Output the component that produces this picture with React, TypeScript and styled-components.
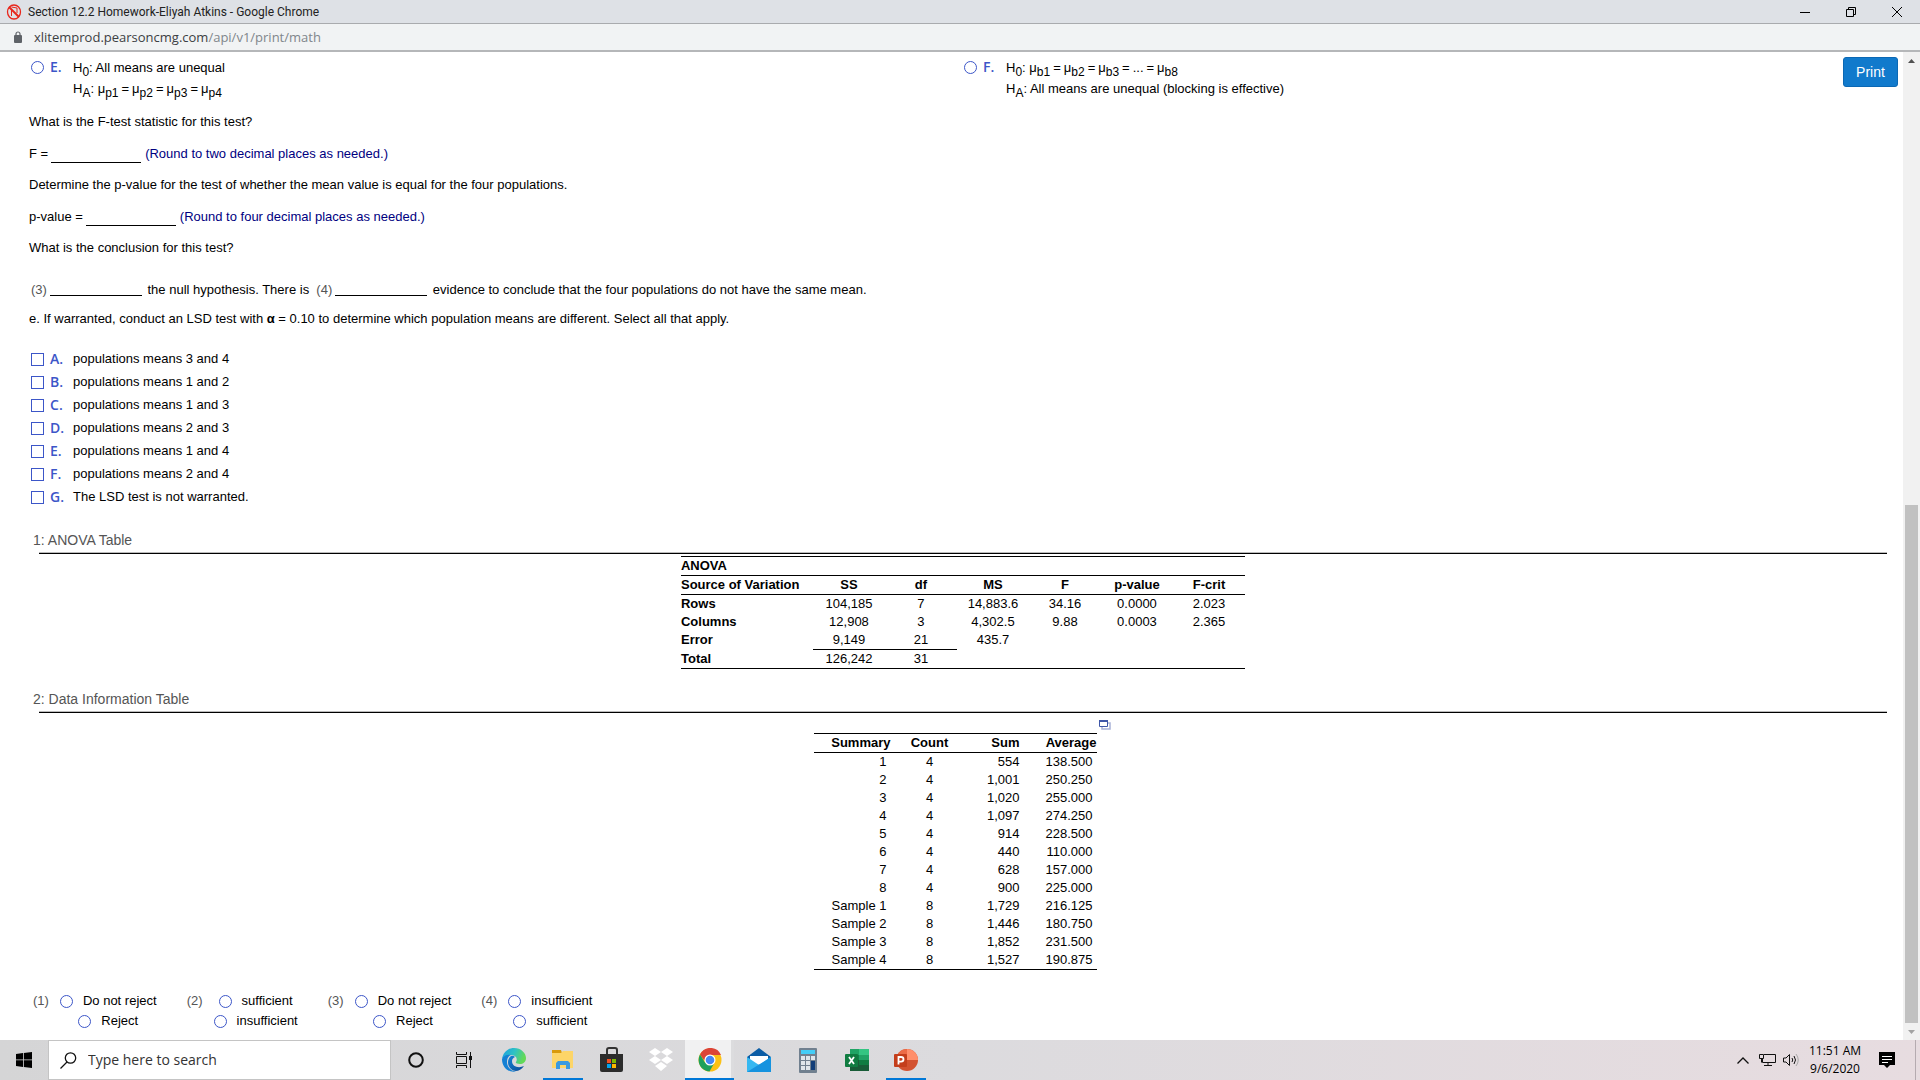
import React from 'react';
import styled, { createGlobalStyle, css } from 'styled-components';

const sans = '"Liberation Sans", Arial, sans-serif';
const ui = '"Open Sans", "Segoe UI", sans-serif';
const blue = '#3c56c8';

const GlobalStyle = createGlobalStyle`
  * { box-sizing: border-box; }
  html, body { margin: 0; padding: 0; overflow: hidden; }
  button, input { font: inherit; margin: 0; padding: 0; border: 0; background: none; color: inherit; border-radius: 0; }
`;

const Screen = styled.div`
  display: flex;
  flex-direction: column;
  height: 100vh;
  background: #fff;
  color: #000;
  font: 13px/16px ${sans};
`;

/* ---------- browser chrome ---------- */
const TitleBar = styled.header`
  display: flex;
  align-items: center;
  height: 24px;
  flex: none;
  padding-left: 6px;
  gap: 6px;
  background: #dee1e6;
  border-bottom: 1px solid #a9abae;
  color: #222;
`;
const WindowTitle = styled.h1`
  margin: 0;
  flex: 1;
  font: 12px/16px Roboto, ${ui};
`;
const WindowButtons = styled.div`
  display: flex;
`;
const WindowButton = styled.button`
  display: grid;
  place-items: center;
  width: 46px;
  height: 20px;
`;
const AddressBar = styled.div`
  display: flex;
  align-items: center;
  gap: 11px;
  height: 28px;
  flex: none;
  padding: 0 0 0 13px;
  background: #f1f3f4;
  border-bottom: 2px solid #b5b7b9;
  color: #3c4043;
  font: 13px/20px ${ui};
`;
const UrlPath = styled.span`
  color: #80868b;
`;

/* ---------- page ---------- */
const Viewport = styled.div`
  position: relative;
  display: flex;
  flex: 1;
  min-height: 0;
`;
const Page = styled.main`
  flex: 1;
  min-width: 0;
  overflow: hidden;
  padding: 7px 8px 0 29px;
`;
const PrintButton = styled.button`
  position: absolute;
  top: 5px;
  right: 22px;
  width: 55px;
  height: 30px;
  border: 1px solid #0b68b4;
  border-radius: 3px;
  background: #117acc;
  color: #fff;
  font: 14px/20px ${sans};
`;
const Hypotheses = styled.div`
  display: grid;
  grid-template-columns: 1fr 1fr;
`;
const Choice = styled.label`
  display: grid;
  grid-template-columns: 21px 23px auto;
  justify-content: start;
`;
const Letter = styled.span`
  color: ${blue};
  font: 600 14px/16px ${ui};
`;
const mark = css`
  appearance: none;
  flex: none;
  width: 13px;
  height: 13px;
  border: 1px solid ${blue};
  background: #fff;
`;
const Radio = styled.input.attrs({ type: 'radio' })`
  ${mark}
  border-radius: 50%;
  ${Choice} & { margin: 2px; }
`;
const Tick = styled.input.attrs({ type: 'checkbox' })`
  ${mark}
  margin: 2px;
`;
const Formula = styled.span`
  line-height: 21px;
  margin-top: -2px;
  & > span { display: block; }
  sub { font-size: 12px; line-height: 0; vertical-align: -4px; }
`;
const Equals = styled.span`
  margin: 0 3px;
`;
const Line = styled.p<{ $tall?: boolean }>`
  display: flex;
  align-items: center;
  margin: 15px 0 0;
  height: ${(p) => (p.$tall ? 17 : 16)}px;
  white-space: pre;
`;
const Conclusion = styled(Line)`
  margin: 26px 0 0;
  padding-left: 2px;
`;
const Prompt = styled(Line)`
  margin-top: 13px;
`;
const Blank = styled.input.attrs({ type: 'text' })<{ $low?: boolean }>`
  width: ${(p) => (p.$low ? 90 : 92)}px;
  height: ${(p) => (p.$low ? 18 : 12)}px;
  margin: 0 ${(p) => (p.$low ? 4 : 2)}px 0 3px;
  align-self: ${(p) => (p.$low ? 'flex-start' : 'center')};
  border-bottom: 1px solid #000;
`;
const Hint = styled.span`
  color: #00007f;
`;
const Num = styled.span`
  color: #555;
`;
const CheckList = styled.div`
  display: grid;
  row-gap: 6px;
  margin: 24px 0 25px;
`;

const Section = styled.section`
  margin: 21px 8px 0 10px;
`;
const SectionTitle = styled.h2`
  margin: 0 0 0 -6px;
  color: #555;
  font: 14px/18px ${sans};
`;
const Rule = styled.div`
  margin: 3px 0 0;
  border-top: 1px solid #bbb;
  border-bottom: 1px solid #000;
`;
const tableBase = css`
  border-collapse: collapse;
  table-layout: fixed;
  border-top: 1px solid #000;
  border-bottom: 1px solid #000;
  font: 13px/18px ${sans};
  th, td { padding: 0; height: 18px; }
`;
const AnovaTable = styled.table`
  ${tableBase}
  width: 564px;
  margin: 2px auto 0;
  text-align: center;
  th:first-child { text-align: left; }
  thead tr { border-bottom: 1px solid #000; }
`;
const Summed = styled.td`
  border-bottom: 1px solid #000;
`;
const DataWrap = styled.div`
  display: flex;
  justify-content: center;
  gap: 2px;
  padding-top: 7px;
`;
const PopButton = styled.button`
  width: 14px;
  height: 12px;
  display: grid;
`;
const DataTable = styled.table`
  ${tableBase}
  width: 283px;
  margin-top: 13px;
  text-align: right;
  thead tr { border-bottom: 1px solid #000; }
  td:first-child, td:last-child { padding-right: 4px; }
  th:nth-child(2), td:nth-child(2) { text-align: center; }
`;
const Answers = styled.div`
  display: flex;
  gap: 30px;
  margin: 21px 0 0 4px;
  font: 13px/20px ${sans};
`;
const Group = styled.fieldset`
  display: flex;
  gap: 11px;
  margin: 0;
  padding: 0;
  border: 0;
`;
const Options = styled.div`
  display: flex;
  flex-direction: column;
  align-items: center;
`;
const Option = styled.label`
  display: flex;
  align-items: center;
  gap: 10px;
`;

const ScrollBar = styled.div`
  display: flex;
  flex-direction: column;
  align-items: center;
  width: 17px;
  flex: none;
  background: #f1f1f1;
`;
const ScrollStep = styled.button`
  display: grid;
  place-items: center;
  width: 17px;
  height: 17px;
`;
const Track = styled.div`
  flex: 1;
  display: grid;
  grid-template-rows: 436fr 518fr;
`;
const Thumb = styled.div`
  grid-row: 2;
  width: 13px;
  background: #c1c1c1;
`;

/* ---------- taskbar ---------- */
const TaskBar = styled.footer`
  display: flex;
  flex: none;
  height: 40px;
  background: linear-gradient(90deg, #d5d5d6, #dcdbde 50%, #e7dce0);
  font: 12px/18px ${ui};
`;
const TaskButton = styled.button<{ $state?: 'open' | 'active' }>`
  display: grid;
  place-items: center;
  width: 49px;
  height: 40px;
  ${(p) => p.$state === 'open' && css`
    background: linear-gradient(#0078d7, #0078d7) center bottom / 40px 2px no-repeat;
  `}
  ${(p) => p.$state === 'active' && css`
    background: #f1f1f2;
    box-shadow: inset 0 -2px #0078d7, inset -3px 0 #dcdcde;
  `}
`;
const StartButton = styled(TaskButton)`
  width: 48px;
`;
const Search = styled.label`
  display: flex;
  align-items: center;
  gap: 11px;
  width: 343px;
  padding-left: 11px;
  border: 1px solid #c4c4c4;
  background: #fff;
  input { flex: 1; min-width: 0; font: 14px/20px ${ui}; outline: none; }
  input::placeholder { color: #333; opacity: 1; }
`;
const Tray = styled.div`
  display: flex;
  align-items: center;
  margin-left: auto;
`;
const TrayButton = styled.button`
  display: grid;
  place-items: center;
  width: 24px;
  height: 40px;
`;
const Clock = styled.time`
  width: 64px;
  text-align: center;
`;
const NoteButton = styled(TrayButton)`
  width: 40px;
  margin-right: 8px;
`;
const DesktopEdge = styled.button`
  width: 5px;
  height: 40px;
  border-left: 1px solid #b5abb0;
`;

const anova: string[][] = [
  ['Rows', '104,185', '7', '14,883.6', '34.16', '0.0000', '2.023'],
  ['Columns', '12,908', '3', '4,302.5', '9.88', '0.0003', '2.365'],
  ['Error', '9,149', '21', '435.7', '', '', ''],
  ['Total', '126,242', '31', '', '', '', ''],
];
const data: string[][] = [
  ['1', '4', '554', '138.500'],
  ['2', '4', '1,001', '250.250'],
  ['3', '4', '1,020', '255.000'],
  ['4', '4', '1,097', '274.250'],
  ['5', '4', '914', '228.500'],
  ['6', '4', '440', '110.000'],
  ['7', '4', '628', '157.000'],
  ['8', '4', '900', '225.000'],
  ['Sample 1', '8', '1,729', '216.125'],
  ['Sample 2', '8', '1,446', '180.750'],
  ['Sample 3', '8', '1,852', '231.500'],
  ['Sample 4', '8', '1,527', '190.875'],
];
const checks = [
  'populations means 3 and 4',
  'populations means 1 and 2',
  'populations means 1 and 3',
  'populations means 2 and 3',
  'populations means 1 and 4',
  'populations means 2 and 4',
  'The LSD test is not warranted.',
];
const answers = [
  ['Do not reject', 'Reject'],
  ['sufficient', 'insufficient'],
  ['Do not reject', 'Reject'],
  ['insufficient', 'sufficient'],
];

const MeansEqual = ({ terms }: { terms: string[] }) => (
  <>
    {terms.map((t, i) => (
      <React.Fragment key={i}>
        {i > 0 && <Equals>=</Equals>}
        {t === '...' ? t : <>μ<sub>{t}</sub></>}
      </React.Fragment>
    ))}
  </>
);

const Edge = () => (
  <svg width="24" height="26" viewBox="0 0 24 26">
    <defs>
      <linearGradient id="edgeTop" x1="0" y1="0" x2="1" y2="0.3">
        <stop offset="0" stopColor="#1b9de2" /><stop offset=".55" stopColor="#2fc2c4" /><stop offset="1" stopColor="#63d957" />
      </linearGradient>
      <linearGradient id="edgeLow" x1="0" y1="0" x2="1" y2="1">
        <stop offset="0" stopColor="#1583d8" /><stop offset="1" stopColor="#0c4a94" />
      </linearGradient>
    </defs>
    <path d="M0 12C1 5 6 1 12 1c7 0 12 5 12 10 0 4-3 6-6 6-3 0-5-1-4-2 2-3 0-7-5-7-4 0-8 2-9 4z" fill="url(#edgeTop)" />
    <path d="M0 12c1-3 5-5 9-4-3 1-4 4-4 7 0 5 4 9 9 9.500C6 26 0 20 0 12z" fill="#1480d4" />
    <path d="M9 9c-4 3-4 9 0 13 3 3 9 3 13-3-5 2.500-12 1-12-5 0-2 1-3 3-4-1-1-3-1.500-4-1z" fill="url(#edgeLow)" />
  </svg>
);
const Folder = () => (
  <svg width="22" height="20" viewBox="0 0 22 20">
    <path d="M0 0h9l1 3H0z" fill="#d99a0b" />
    <path d="M0 3h9l2-2h10v17H0z" fill="#fdd568" />
    <path d="M4 19v-6l2-2h10l2 2v6h-4v-4H8v4z" fill="#3a9ae0" />
  </svg>
);
const Store = () => (
  <svg width="24" height="26" viewBox="0 0 24 26">
    <path d="M7 8V3q0-2 2-2h6q2 0 2 2v5" fill="none" stroke="#333" strokeWidth="2" />
    <path d="M0 7h23v16q0 2-2 2H2q-2 0-2-2z" fill="#2c2c2c" />
    <path d="M7 12h4v4H7z" fill="#f25022" /><path d="M12 12h4v4h-4z" fill="#7fba00" />
    <path d="M7 17h4v4H7z" fill="#00a4ef" /><path d="M12 17h4v4h-4z" fill="#ffb900" />
  </svg>
);
const Dropbox = () => (
  <svg width="24" height="24" viewBox="0 0 24 24" fill="#fff">
    <path d="M6 0l6 4-6 4-6-4zM18 0l6 4-6 4-6-4zM6 8l6 4-6 4-6-4zM18 8l6 4-6 4-6-4zM12 14l6 4-6 5-6-5z" />
  </svg>
);
const Chrome = () => (
  <svg width="24" height="24" viewBox="0 0 24 24">
    <circle cx="12" cy="12" r="11.500" fill="#fbc116" />
    <path d="M23 7H12l-6 5L2 6.500A11.500 11.500 0 0 1 23 7z" fill="#dc4437" />
    <path d="M2 6.500A11.500 11.500 0 0 0 11.500 23.500L16 15.500l-9-1z" fill="#1da05c" />
    <circle cx="12" cy="12" r="5.500" fill="#fff" /><circle cx="12" cy="12" r="4.300" fill="#4587f4" />
  </svg>
);
const Mail = () => (
  <svg width="24" height="24" viewBox="0 0 24 24">
    <path d="M0 9L12 0l12 9v3H0z" fill="#0c5da5" />
    <path d="M3 8h18v8H3z" fill="#fff" />
    <path d="M0 9l12 8 12-8v15H0z" fill="#35b8f1" /><path d="M0 24L24 9v15z" fill="#1593df" />
  </svg>
);
const Calc = () => (
  <svg width="18" height="25" viewBox="0 0 18 25">
    <rect width="18" height="25" rx="1" fill="#71808f" />
    <path d="M2 2h14v4H2z" fill="#43cdf7" />
    <path d="M2 8h4v4H2zM7 8h4v4H7zM12 8h4v4h-4zM2 13h4v4H2zM7 13h4v4H7zM2 18h4v4H2zM7 18h4v4H7z" fill="#dfe5ea" />
    <path d="M12 13h4v9h-4z" fill="#123e78" />
  </svg>
);
const Excel = () => (
  <svg width="24" height="24" viewBox="0 0 24 24">
    <path d="M5 1h9v22H5z" fill="#20a465" /><path d="M14 1h10v6H14z" fill="#34c582" />
    <path d="M5 7h9v5H5z" fill="#138049" /><path d="M14 7h10v5H14z" fill="#21a366" />
    <path d="M5 12h19v11H5z" fill="#185c37" /><path d="M14 12h10v5H14z" fill="#107c41" />
    <rect x="0" y="6" width="13" height="13" rx="1" fill="#107c41" />
    <path d="M4 9l5 7M9 9l-5 7" stroke="#fff" strokeWidth="1.800" />
  </svg>
);
const PowerPoint = () => (
  <svg width="24" height="24" viewBox="0 0 24 24">
    <circle cx="13" cy="12" r="11" fill="#d35230" />
    <path d="M13 1a11 11 0 0 1 11 11H13z" fill="#ff8f6b" /><path d="M13 1v11H2A11 11 0 0 1 13 1z" fill="#ed6c47" />
    <rect x="0" y="6" width="13" height="13" rx="1" fill="#c43e1c" />
    <path d="M4.500 16.500V9h2.500q2.500 0 2.500 2.300T7 13.700H4.500" fill="none" stroke="#fff" strokeWidth="1.800" />
  </svg>
);
const Cortana = () => (
  <svg width="16" height="18" viewBox="0 0 16 18"><circle cx="8" cy="9" r="6.800" fill="none" stroke="#111" strokeWidth="2" /></svg>
);
const TaskView = () => (
  <svg width="17" height="16" viewBox="0 0 17 16" fill="none" stroke="#111">
    <path d="M.5 0v2.500h10V0M.5 16v-2.500h10V16M.5 4.500h10v7H.5zM14.500 0v4M14.500 8v8" />
    <path d="M13 4h3v4h-3z" fill="#111" stroke="none" />
  </svg>
);

const apps: [string, React.ReactNode, ('open' | 'active')?][] = [
  ['Cortana', <Cortana />],
  ['Task View', <TaskView />],
  ['Microsoft Edge', <Edge />],
  ['File Explorer', <Folder />, 'open'],
  ['Microsoft Store', <Store />],
  ['Dropbox', <Dropbox />],
  ['Google Chrome', <Chrome />, 'active'],
  ['Mail', <Mail />],
  ['Calculator', <Calc />],
  ['Excel', <Excel />],
  ['PowerPoint', <PowerPoint />, 'open'],
];

export default function App() {
  return (
    <Screen>
      <GlobalStyle />
      <TitleBar>
        <svg width="16" height="16" viewBox="0 0 16 16" fill="none" stroke="#e8261c">
          <ellipse cx="8" cy="8" rx="6.500" ry="7" strokeWidth="1.300" />
          <path d="M3 3l10 10" strokeWidth="2" /><path d="M5.500 12V6M11 9V4L5.500 3" strokeWidth="1" />
        </svg>
        <WindowTitle>Section 12.2 Homework-Eliyah Atkins - Google Chrome</WindowTitle>
        <WindowButtons>
          <WindowButton aria-label="Minimize">
            <svg width="10" height="10"><path d="M0 5.500h10" stroke="#000" /></svg>
          </WindowButton>
          <WindowButton aria-label="Restore">
            <svg width="10" height="10" fill="none" stroke="#000"><path d="M.5 2.500h7v7h-7zM2.500 2.500v-2h7v7h-2" /></svg>
          </WindowButton>
          <WindowButton aria-label="Close">
            <svg width="10" height="10"><path d="M0 0l10 10M10 0L0 10" stroke="#000" /></svg>
          </WindowButton>
        </WindowButtons>
      </TitleBar>
      <AddressBar>
        <svg width="10" height="12" viewBox="0 0 10 12"><path d="M2 4h6q1 0 1 1v6q0 1-1 1H2q-1 0-1-1V5q0-1 1-1z" fill="#5f6368" /><path d="M3 5V3a2 2 0 0 1 4 0v2" fill="none" stroke="#5f6368" strokeWidth="1.200" /></svg>
        <span>xlitemprod.pearsoncmg.com<UrlPath>/api/v1/print/math</UrlPath></span>
      </AddressBar>

      <Viewport>
        <Page>
          <Hypotheses>
            <Choice>
              <Radio name="hyp" />
              <Letter>E.</Letter>
              <Formula>
                <span>H<sub>0</sub>: All means are unequal</span>
                <span>H<sub>A</sub>: <MeansEqual terms={['p1', 'p2', 'p3', 'p4']} /></span>
              </Formula>
            </Choice>
            <Choice>
              <Radio name="hyp" />
              <Letter>F.</Letter>
              <Formula>
                <span>H<sub>0</sub>: <MeansEqual terms={['b1', 'b2', 'b3', '...', 'b8']} /></span>
                <span>H<sub>A</sub>: All means are unequal (blocking is effective)</span>
              </Formula>
            </Choice>
          </Hypotheses>
          <Line>What is the F-test statistic for this test?</Line>
          <Line $tall><label htmlFor="f">F =</label><Blank id="f" $low /><Hint>(Round to two decimal places as needed.)</Hint></Line>
          <Line>Determine the p-value for the test of whether the mean value is equal for the four populations.</Line>
          <Line $tall><label htmlFor="p">p-value =</label><Blank id="p" $low /><Hint>(Round to four decimal places as needed.)</Hint></Line>
          <Line>What is the conclusion for this test?</Line>
          <Conclusion>
            <Num>(3)</Num><Blank aria-label="Blank 3" /> the null hypothesis. There is  <Num>(4)</Num><Blank aria-label="Blank 4" /> evidence to conclude that the four populations do not have the same mean.
          </Conclusion>
          <Prompt>e. If warranted, conduct an LSD test with <b>α</b> = 0.10 to determine which population means are different. Select all that apply.</Prompt>
          <CheckList>
            {checks.map((c, i) => (
              <Choice key={i}><Tick /><Letter>{'ABCDEFG'[i]}.</Letter><span>{c}</span></Choice>
            ))}
          </CheckList>

          <Section>
            <SectionTitle>1: ANOVA Table</SectionTitle>
            <Rule />
            <AnovaTable>
              <colgroup><col width="132" />{[1, 2, 3, 4, 5, 6].map((n) => <col key={n} width="72" />)}</colgroup>
              <thead>
                <tr><th colSpan={7}>ANOVA</th></tr>
                <tr>{['Source of Variation', 'SS', 'df', 'MS', 'F', 'p-value', 'F-crit'].map((h) => <th key={h}>{h}</th>)}</tr>
              </thead>
              <tbody>
                {anova.map(([head, ...cells]) => (
                  <tr key={head}>
                    <th>{head}</th>
                    {cells.map((c, i) => (head === 'Error' && i < 2 ? <Summed key={i}>{c}</Summed> : <td key={i}>{c}</td>))}
                  </tr>
                ))}
              </tbody>
            </AnovaTable>
          </Section>

          <Section>
            <SectionTitle>2: Data Information Table</SectionTitle>
            <Rule />
            <DataWrap>
              <DataTable>
                <colgroup><col width="77" /><col width="78" /><col width="51" /><col width="77" /></colgroup>
                <thead><tr>{['Summary', 'Count', 'Sum', 'Average'].map((h) => <th key={h}>{h}</th>)}</tr></thead>
                <tbody>{data.map((r) => <tr key={r[0]}>{r.map((c, i) => <td key={i}>{c}</td>)}</tr>)}</tbody>
              </DataTable>
              <PopButton aria-label="Open table">
                <svg width="12" height="10" fill="none"><path d="M3 3h8v6H3z" stroke="#a9b2d8" strokeWidth="1.500" /><path d="M.5 1h8v5.500h-8z" fill="#fff" stroke="#3f57a8" /><path d="M0 1h9" stroke="#3f57a8" strokeWidth="2" /></svg>
              </PopButton>
            </DataWrap>
          </Section>

          <Answers>
            {answers.map((opts, i) => (
              <Group key={i} aria-label={`Blank ${i + 1}`}>
                <Num>({i + 1})</Num>
                <Options>{opts.map((o) => <Option key={o}><Radio name={`a${i}`} />{o}</Option>)}</Options>
              </Group>
            ))}
          </Answers>
        </Page>
        <ScrollBar>
          <ScrollStep aria-label="Scroll up"><svg width="7" height="4"><path d="M0 4L3.500 0 7 4z" fill="#505050" /></svg></ScrollStep>
          <Track><Thumb /></Track>
          <ScrollStep aria-label="Scroll down"><svg width="7" height="4"><path d="M0 0h7L3.500 4z" fill="#a3a3a3" /></svg></ScrollStep>
        </ScrollBar>
        <PrintButton>Print</PrintButton>
      </Viewport>

      <TaskBar>
        <StartButton aria-label="Start">
          <svg width="16" height="16" viewBox="0 0 16 16"><path d="M0 2l7-1v6.500H0zM7.800.9L16 0v7.500H7.800zM0 8.300h7V15l-7-1zM7.800 8.300H16V16l-8.200-1z" /></svg>
        </StartButton>
        <Search>
          <svg width="17" height="17" viewBox="0 0 17 17" fill="none" stroke="#111" strokeWidth="1.300"><circle cx="10.500" cy="6" r="5.200" /><path d="M7 10l-6.500 6.500" /></svg>
          <input type="text" aria-label="Search" placeholder="Type here to search" />
        </Search>
        {apps.map(([name, icon, state]) => <TaskButton key={name} aria-label={name} $state={state}>{icon}</TaskButton>)}
        <Tray>
          <TrayButton aria-label="Show hidden icons"><svg width="12" height="7" fill="none" stroke="#111" strokeWidth="1.300"><path d="M.5 6.500L6 1l5.500 5.500" /></svg></TrayButton>
          <TrayButton aria-label="Network"><svg width="17" height="14" fill="none" stroke="#111"><path d="M5 1.500h11.500v8H3.500V6M5 12.500h8M9 10v3M.5 1.500h4v4h-4zM2.500 5.500v4" /></svg></TrayButton>
          <TrayButton aria-label="Volume"><svg width="17" height="14" fill="none" stroke="#111"><path d="M.5 5h2.500l3.500-3.500v11L3 9H.5zM9 5q1.500 2 0 4M11 3q3 4 0 8" /><path d="M13 1q4.500 6 0 12" stroke="#aaa" /></svg></TrayButton>
          <Clock>11:51 AM<br />9/6/2020</Clock>
          <NoteButton aria-label="Notifications"><svg width="16" height="16"><path d="M0 0h16v13h-5l-3 3-3-3H0z" /><path d="M3 4.500h10M3 7.500h10M3 10.500h6" stroke="#fff" /></svg></NoteButton>
          <DesktopEdge aria-label="Show desktop" />
        </Tray>
      </TaskBar>
    </Screen>
  );
}
